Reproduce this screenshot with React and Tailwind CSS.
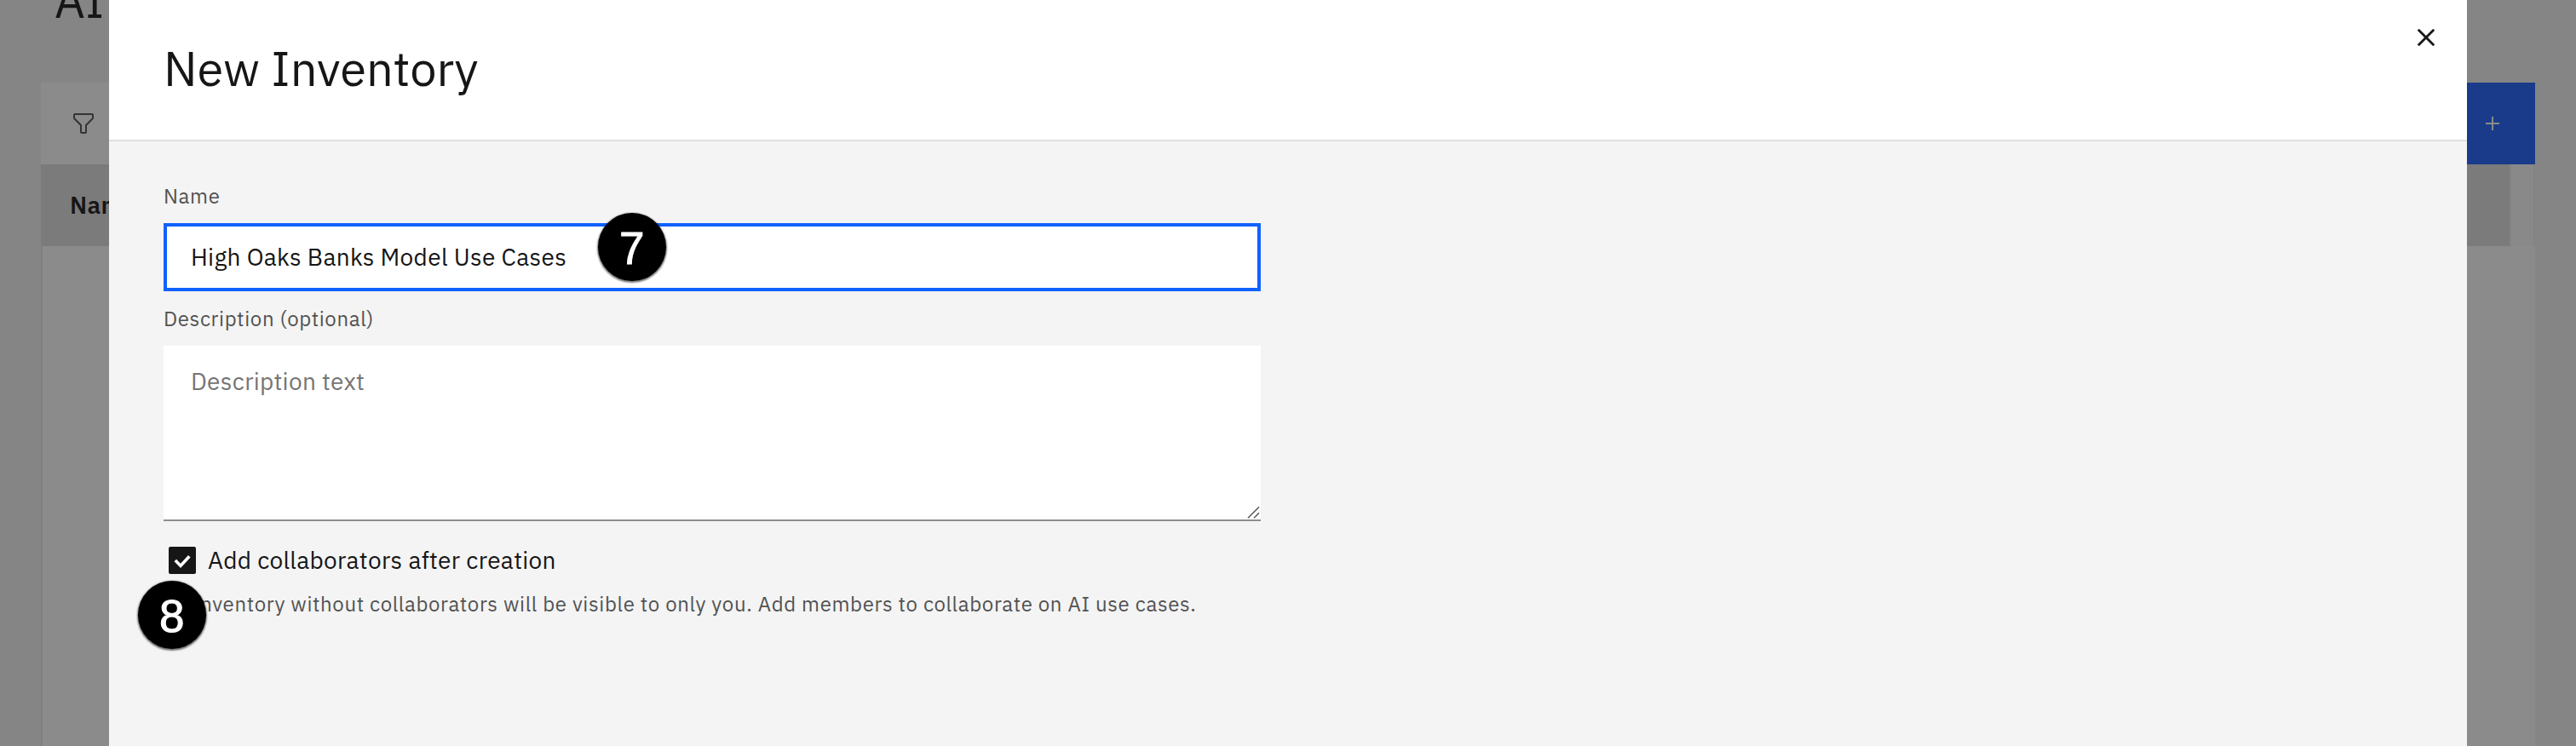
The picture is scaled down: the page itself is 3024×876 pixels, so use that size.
import React from 'react';

function FilterIcon() {
  return (
    <svg viewBox="0 0 32 32" className="size-8 shrink-0 fill-[#343434]">
      <path d="M18,28H14a2,2,0,0,1-2-2V18.41L4.59,11A2,2,0,0,1,4,9.59V6A2,2,0,0,1,6,4H26a2,2,0,0,1,2,2V9.59A2,2,0,0,1,27.41,11L20,18.41V26A2,2,0,0,1,18,28ZM6,6V9.59l8,8V26h4V17.59l8-8V6Z" />
    </svg>
  );
}

function CloseIcon() {
  return (
    <svg viewBox="0 0 32 32" className="size-10 fill-[#161616] stroke-[#161616]" strokeWidth="0.35">
      <path d="M24 9.4 22.6 8 16 14.6 9.4 8 8 9.4 14.6 16 8 22.6 9.4 24 16 17.4 22.6 24 24 22.6 17.4 16z" />
    </svg>
  );
}

function PlusIcon() {
  return (
    <svg viewBox="0 0 32 32" className="size-8 fill-[#8b8b8b]">
      <path d="M17 15V8h-2v7H8v2h7v7h2v-7h7v-2z" />
    </svg>
  );
}

function StepBadge({ children, className }) {
  return (
    <div
      className={`absolute flex size-20 items-center justify-center rounded-full bg-black pt-[2px] font-['Liberation_Sans',sans-serif] text-[53px] leading-none text-white [-webkit-text-stroke:1px_white] shadow-[0_1px_2px_1px_rgba(0,0,0,0.55)] ${className}`}
    >
      {children}
    </div>
  );
}

function InventoryPage() {
  return (
    <div className="col-start-1 row-start-1 flex h-[876px] flex-col overflow-hidden bg-[#858585] px-12">
      <div className="h-[97px] shrink-0 pl-4">
        <h1 className="-mt-9 text-[56px] leading-[72px] whitespace-nowrap">AI</h1>
      </div>
      <div className="flex h-24 shrink-0 items-center justify-between bg-[#8b8b8b] pl-[34px]">
        <FilterIcon />
        <button className="flex h-24 w-24 items-center justify-end bg-[#1a3b8a] pr-[34px]">
          <PlusIcon />
        </button>
      </div>
      <div className="flex h-24 shrink-0">
        <div className="flex flex-1 items-center bg-[#7b7b7b] pl-[34px] text-[28px] leading-9 font-semibold tracking-[0.32px]">
          Name
        </div>
        <div className="w-[30px] border-x-2 border-[#838383] bg-[#898989]" />
      </div>
      <div className="flex-1 border-l-2 border-[#7f7f7f] bg-[#8b8b8b]" />
    </div>
  );
}

function NewInventoryModal() {
  return (
    <div className="relative z-10 col-start-1 row-start-1 mx-32 flex h-[876px] flex-col bg-[#f4f4f4]">
      <header className="flex h-[166px] shrink-0 items-start justify-between border-b-2 border-[#e0e0e0] bg-white pl-16">
        <h2 className="pt-[44px] text-[56px] leading-[72px]">New Inventory</h2>
        <button className="mt-6 mr-7">
          <CloseIcon />
        </button>
      </header>

      <div className="flex w-[1352px] flex-col pt-12 pl-16">
        <div className="text-[24px] leading-8 tracking-[0.64px] text-[#525252]">Name</div>
        <div className="relative mt-4 flex h-20 items-center border-4 border-[#0f62fe] bg-white px-7 text-[28px] leading-9 tracking-[0.32px]">
          High Oaks Banks Model Use Cases
          <StepBadge className="-top-4 left-[506px]">7</StepBadge>
        </div>

        <div className="mt-4 text-[24px] leading-8 tracking-[0.64px] text-[#525252]">
          Description (optional)
        </div>
        <div className="relative mt-4 h-[206px] border-b-2 border-[#8d8d8d] bg-white px-8 pt-[22px] text-[28px] leading-10 tracking-[0.32px] text-[#757575]">
          Description text
          <svg viewBox="0 0 16 16" className="absolute right-0 bottom-0 size-4 fill-none stroke-[#555]">
            <path d="M1 14.3 14 1.3M8 14.3l6-6" strokeWidth="1.5" />
          </svg>
        </div>

        <div className="mt-7 flex items-center pl-1.5">
          <svg viewBox="0 0 32 32" className="size-8">
            <rect width="32" height="32" rx="2" fill="#161616" />
            <path d="M7.8 16 14 22.4 24.3 11.2" fill="none" stroke="#fff" strokeWidth="3.6" />
          </svg>
          <div className="pl-[14px] text-[28px] leading-9 tracking-[0.32px]">
            Add collaborators after creation
          </div>
        </div>

        <div className="relative mt-[17px] text-[24px] leading-8 tracking-[0.64px] whitespace-nowrap text-[#525252]">
          An inventory without collaborators will be visible to only you. Add members to collaborate on AI use cases.
          <StepBadge className="-top-[11px] -left-[30px]">8</StepBadge>
        </div>
      </div>
    </div>
  );
}

export default function App() {
  return (
    <div className="grid h-[876px] w-[3024px] grid-cols-1 overflow-hidden font-['IBM_Plex_Sans','Noto_Sans',sans-serif] text-[#161616]">
      <InventoryPage />
      <NewInventoryModal />
    </div>
  );
}
